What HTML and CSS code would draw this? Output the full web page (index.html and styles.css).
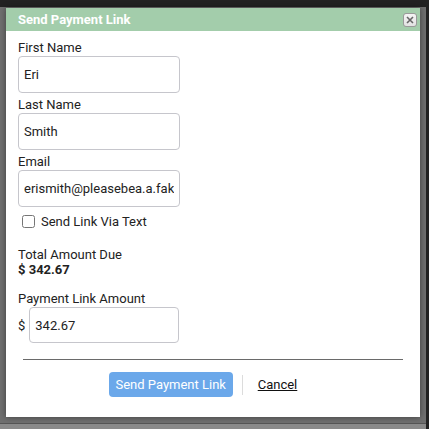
FILE: index.html
```html
<!DOCTYPE html>
<html>
<head>
<meta charset="utf-8">
<link rel="stylesheet" href="styles.css">
</head>
<body>
<div class="backdrop">
  <div class="dialog">
    <div class="titlebar">
      <span class="title">Send Payment Link</span>
      <button class="close" aria-label="Close">
        <svg width="8" height="8" viewBox="0 0 8 8"><path d="M1 1L7 7M7 1L1 7" stroke="#666" stroke-width="1.6"/></svg>
      </button>
    </div>
    <div class="content">
      <div class="field">
        <label class="label">First Name</label>
        <input class="input" type="text" value="Eri">
      </div>
      <div class="field">
        <label class="label">Last Name</label>
        <input class="input" type="text" value="Smith">
      </div>
      <div class="field">
        <label class="label">Email</label>
        <input class="input" type="text" value="erismith@pleasebea.a.fake.email">
      </div>
      <label class="check-row">
        <input class="check" type="checkbox">
        <span>Send Link Via Text</span>
      </label>
      <div class="total">
        <div class="label">Total Amount Due</div>
        <div class="amount">$ 342.67</div>
      </div>
      <div class="field">
        <label class="label">Payment Link Amount</label>
        <div class="money">
          <span class="currency">$</span>
          <input class="input input-amount" type="text" value="342.67">
        </div>
      </div>
      <hr class="rule">
      <div class="actions">
        <button class="primary">Send Payment Link</button>
        <span class="divider"></span>
        <a class="cancel" href="#">Cancel</a>
      </div>
    </div>
  </div>
</div>
</body>
</html>
```
FILE: styles.css
```css
html, body {
  margin: 0;
  padding: 0;
}
body {
  background: #222222;
  width: 429px;
  height: 429px;
  overflow: hidden;
  font-family: Roboto, "Liberation Sans", Arial, sans-serif;
  color: #222;
}
.backdrop {
  margin-top: 7px;
  width: 426px;
  height: 422px;
  background: linear-gradient(to bottom, #6f6f6f 0, #6f6f6f 416px, #555 416px, #555 417px, #8a8a8a 417px);
  padding-top: 1px;
  box-sizing: border-box;
}
.dialog {
  margin-left: 6px;
  width: 414px;
  height: 409px;
  background: #fff;
  box-shadow: 0 0 6px rgba(0,0,0,0.45);
  display: flex;
  flex-direction: column;
}
.titlebar {
  height: 23px;
  background: #a3cdab;
  display: flex;
  align-items: center;
  justify-content: space-between;
  padding: 0 3px 0 12px;
}
.title {
  color: #fff;
  font-weight: bold;
  font-size: 13px;
}
.close {
  width: 14px;
  height: 14px;
  padding: 0;
  margin: 0;
  border: 1px solid #9a9a9a;
  border-radius: 3px;
  background: linear-gradient(#f4f4f4, #e2e2e2);
  display: flex;
  align-items: center;
  justify-content: center;
}
.content {
  padding: 9px 17px 0 12px;
  display: flex;
  flex-direction: column;
}
.field {
  display: flex;
  flex-direction: column;
  margin-bottom: 4px;
}
.label {
  display: block;
  font-size: 13px;
  line-height: 15px;
  color: #222;
  margin-bottom: 1px;
}
.input {
  box-sizing: border-box;
  width: 162px;
  height: 37px;
  border: 1px solid #c6c6cc;
  border-radius: 4px;
  padding: 0 5px;
  font-family: Roboto, "Liberation Sans", Arial, sans-serif;
  font-size: 13px;
  color: #222;
  background: #fff;
  outline: none;
}
.check-row {
  display: flex;
  align-items: center;
  font-size: 13px;
  line-height: 15px;
  margin-top: 3px;
  margin-left: 4px;
  color: #222;
}
.check {
  width: 13px;
  height: 13px;
  margin: 0 6px 0 0;
}
.total {
  margin-top: 18px;
  margin-bottom: 14px;
}
.total .label {
  margin-bottom: 0;
}
.amount {
  font-size: 13px;
  line-height: 15px;
  font-weight: bold;
}
.money {
  display: flex;
  align-items: center;
  gap: 4px;
}
.currency {
  font-size: 13px;
}
.input-amount {
  width: 150px;
  height: 36px;
}
.rule {
  margin: 12px 0 0 5px;
  border: 0;
  border-top: 1px solid #6a6a6a;
  height: 0;
}
.actions {
  display: flex;
  align-items: center;
  justify-content: center;
  margin-top: 12px;
  padding-right: 15px;
}
.primary {
  width: 124px;
  height: 25px;
  border: 0;
  border-radius: 4px;
  background: #6ba8ea;
  color: #fff;
  font-family: Roboto, "Liberation Sans", Arial, sans-serif;
  font-size: 13px;
  padding: 0;
}
.divider {
  width: 1px;
  height: 20px;
  background: #dcdcdc;
  margin: 0 15px 0 9px;
}
.cancel {
  color: #111;
  font-size: 13px;
  text-decoration: underline;
}
```
